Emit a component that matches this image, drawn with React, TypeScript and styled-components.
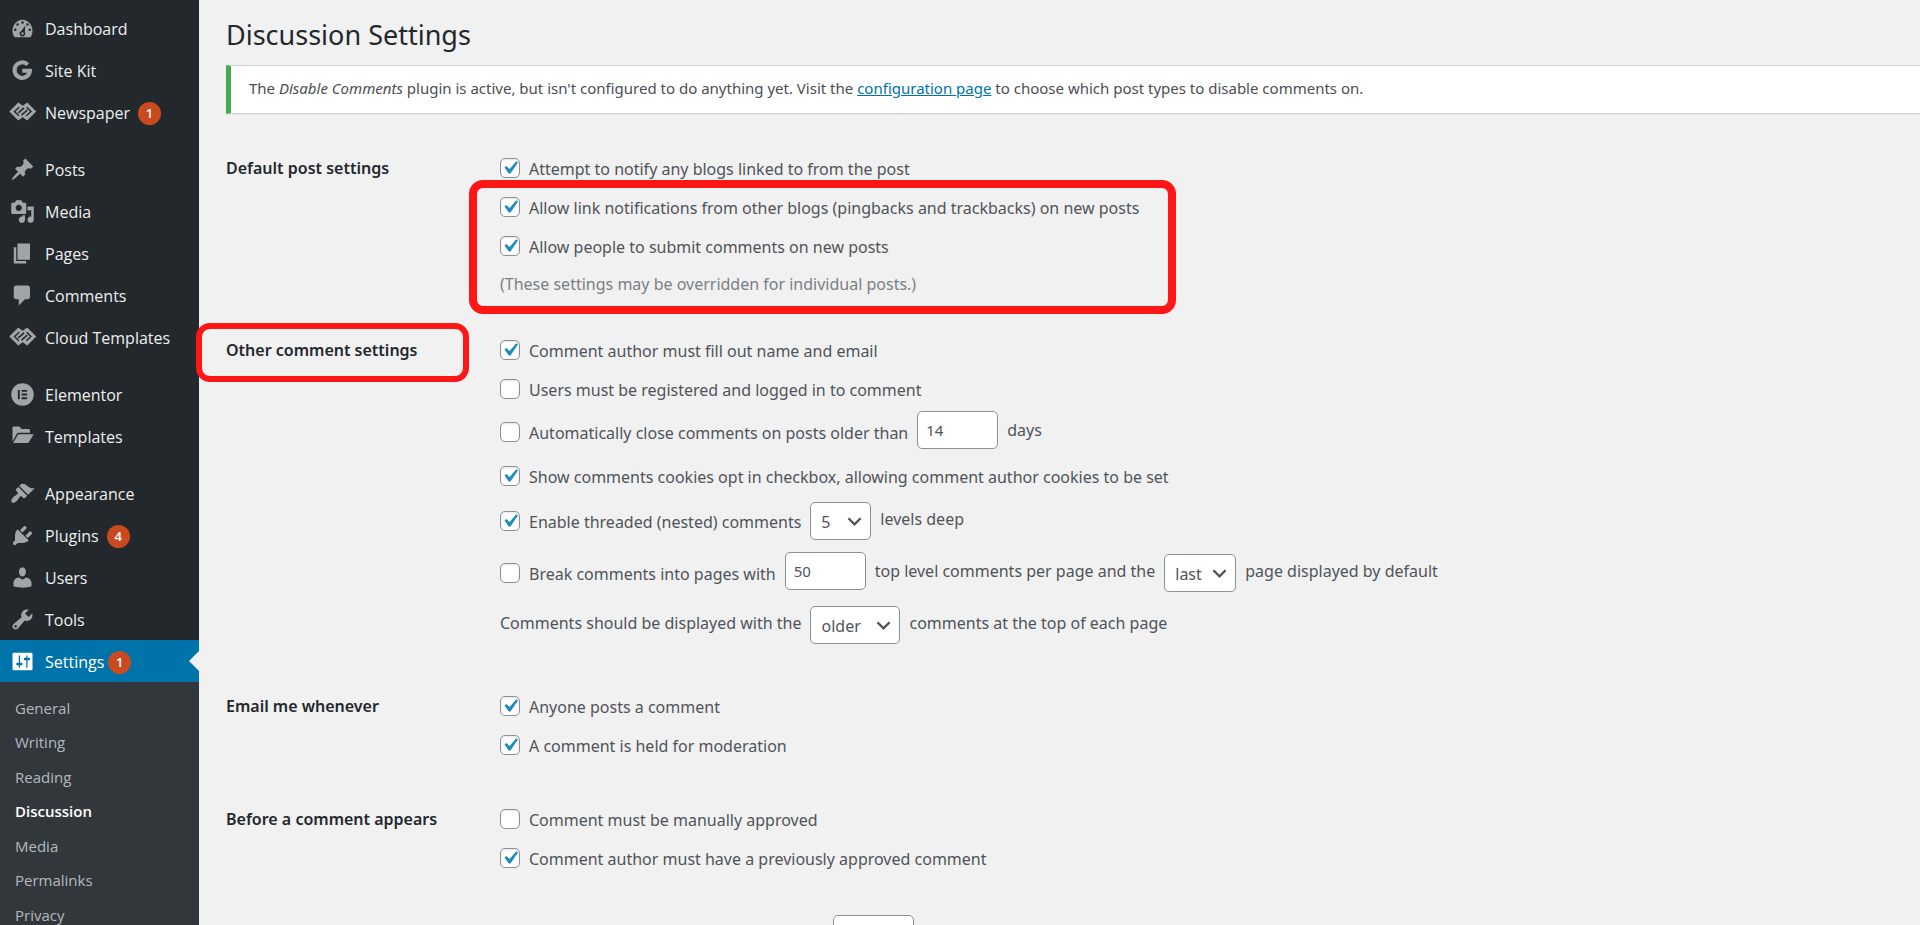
import React, { useId, useState } from "react";
import styled, { createGlobalStyle, css } from "styled-components";

const GlobalStyle = createGlobalStyle`
  *, *::before, *::after { box-sizing: border-box; }
  body {
    margin: 0;
    background: #f1f1f1;
    color: #50545a;
    font-family: "Open Sans", "Noto Sans", sans-serif;
    font-size: 16px;
    line-height: 24px;
  }
`;

/* ---------- shell ---------- */

const Shell = styled.div`
  display: flex;
  height: 100vh;
  overflow: hidden;
`;

const Sidebar = styled.nav`
  flex: 0 0 199px;
  padding-top: 7px;
  background: #23282d;
`;

const Main = styled.main`
  flex: 1;
  min-width: 0;
  padding: 15px 0 0 27px;
  font-family: "Noto Sans", "Open Sans", sans-serif;
`;

/* ---------- sidebar ---------- */

const MenuList = styled.ul`
  list-style: none;
  margin: 0;
  padding: 0;
`;

const MenuItem = styled.li<{ $startsGroup?: boolean }>`
  margin-top: ${(p) => (p.$startsGroup ? "15px" : "0")};
`;

const MenuLink = styled.a<{ $current?: boolean }>`
  position: relative;
  display: flex;
  align-items: center;
  height: 42px;
  padding-left: 10px;
  color: #eee;
  text-decoration: none;
  ${(p) =>
    p.$current &&
    css`
      background: #0073aa;
      color: #fff;
      &::after {
        content: "";
        position: absolute;
        top: 11px;
        right: 0;
        border: 10px solid transparent;
        border-left: 0;
        border-right-color: #f1f1f1;
      }
    `}
`;

const MenuIcon = styled.svg<{ $current?: boolean }>`
  flex: none;
  overflow: visible;
  width: 25px;
  height: 25px;
  margin-right: 10px;
  fill: ${(p) => (p.$current ? "#fff" : "#a0a5aa")};
`;

const MenuText = styled.span`
  padding-top: 2px;
`;

const Badge = styled.span<{ $tight?: boolean }>`
  width: 23px;
  height: 23px;
  margin-top: 3px;
  margin-left: ${(p) => (p.$tight ? "4px" : "8px")};
  border-radius: 50%;
  background: #ca4a1f;
  color: #fff;
  font-size: 13px;
  font-weight: 600;
  line-height: 22px;
  text-align: center;
`;

const SubMenu = styled.ul`
  display: grid;
  grid-auto-rows: 1fr;
  min-height: 261px;
  margin: 0;
  padding: 10px 0;
  list-style: none;
  background: #32373c;
`;

const SubLink = styled.a<{ $current?: boolean }>`
  display: block;
  padding: 4px 15px;
  color: ${(p) => (p.$current ? "#fff" : "#b4b9be")};
  font-size: 15px;
  font-weight: ${(p) => (p.$current ? 600 : 400)};
  text-decoration: none;
`;

const BUILDER_LOGO = (
  <g transform="translate(-.6 2)">
    <path d="M0 7.200L7.200 0l3.600 2.600L14.400 0l7.200 7.200-7.200 7.200-3.600-2.600-3.600 2.600z" />
    <path
      d="M7.600 10.600L4.200 7.200 8 3.800M14 3.800L17.400 7.200 13.600 10.600M7.200 8.300l4.600-4M14.400 6.100l-4.600 4"
      fill="none"
      stroke="#23282d"
      strokeWidth="1.100"
    />
  </g>
);

const ICONS: Record<string, React.ReactNode> = {
  dashboard: (
    <path
      fillRule="evenodd"
      d="M3.76 17h12.48c1.1-1.37 1.76-3.11 1.76-5 0-4.97-3.58-9-8-9s-8 4.03-8 9c0 1.89.66 3.63 1.76 5zM10 4.2a1 1 0 1 1 0 2 1 1 0 0 1 0-2zM6 5.8a1 1 0 1 1 0 2 1 1 0 0 1 0-2zm8 0a1 1 0 1 1 0 2 1 1 0 0 1 0-2zM4.2 10a1 1 0 1 1 0 2 1 1 0 0 1 0-2zm11.6 0a1 1 0 1 1 0 2 1 1 0 0 1 0-2zM12.3 7.6l-.5 5.3a2.2 2.2 0 1 1-2.9-.8zM10 13a1 1 0 1 0 0 2 1 1 0 0 0 0-2z"
    />
  ),
  sitekit: (
    <path
      d="M14.200 5.300A6.200 6.200 0 1 0 16 10.100H9.800"
      fill="none"
      stroke="#a0a5aa"
      strokeWidth="3.200"
    />
  ),
  builder: BUILDER_LOGO,
  post: (
    <path d="M10.44 3.02l1.82-1.82 6.36 6.35-1.83 1.82c-1.05-.68-2.48-.57-3.41.36l-.75.75c-.92.93-1.04 2.35-.35 3.41l-1.83 1.82-2.41-2.41-2.8 2.79c-.42.42-3.38 2.71-3.8 2.29s1.86-3.39 2.28-3.81l2.79-2.79L4.1 9.36l1.83-1.82c1.05.69 2.48.57 3.4-.36l.75-.75c.93-.92 1.05-2.35.36-3.41z" />
  ),
  media: (
    <path d="M13 11V4c0-.55-.45-1-1-1h-1.67L9 1H5L3.67 3H2c-.55 0-1 .45-1 1v7c0 .55.45 1 1 1h10c.55 0 1-.45 1-1zM7 4.5c1.38 0 2.5 1.12 2.5 2.5S8.38 9.5 7 9.5 4.5 8.38 4.5 7 5.62 4.5 7 4.5zM14 6h5v10.5c0 1.38-1.12 2.5-2.5 2.5S14 17.88 14 16.5s1.12-2.5 2.5-2.5c.17 0 .34.02.5.05V9h-3V6zm-4 8.05V13h2v3.5c0 1.38-1.12 2.5-2.5 2.5S7 17.88 7 16.5 8.12 14 9.5 14c.17 0 .34.02.5.05z" />
  ),
  page: <path d="M6 15V2h10v13H6zm-1 1h8v2H3V5h2v11z" />,
  comments: (
    <path d="M5 2h9c1.1 0 2 .9 2 2v7c0 1.1-.9 2-2 2h-2l-5 5v-5H5c-1.1 0-2-.9-2-2V4c0-1.1.9-2 2-2z" />
  ),
  elementor: (
    <path
      fillRule="evenodd"
      d="M10 1a9 9 0 1 1 0 18 9 9 0 0 1 0-18zM6.3 6.3v7.4h1.5V6.3zm3 0v1.5h4.4V6.3zm0 2.95v1.5h4.4v-1.5zm0 2.95v1.5h4.4v-1.5z"
    />
  ),
  folder: (
    <path d="M2 3.2C2 2.5 2.5 2 3.200 2h4.300l1.700 2h5.600c.7 0 1.200.5 1.200 1.200V7H7.200c-.8 0-1.400.4-1.800 1L2 14zM7.400 8.200H19l-3.800 6.200c-.3.500-.7.800-1.300.8H2.500l3.700-6.400c.3-.4.700-.6 1.200-.6z" />
  ),
  appearance: (
    <path d="M14.48 11.06L7.41 3.99l1.5-1.5c.5-.56 2.3-.47 3.51.32 1.21.8 1.43 1.28 2.91 2.1 1.18.64 2.45 1.26 4.45.85zm-.71.71L6.7 4.7 4.93 6.47c-.39.39-.39 1.02 0 1.41l1.06 1.06c.39.39.39 1.03 0 1.42-.6.6-1.43 1.11-2.21 1.69-.35.26-.7.53-1.01.84C1.43 14.23.4 16.08 1.4 17.07c.99 1 2.84-.03 4.18-1.36.31-.31.58-.66.85-1.02.57-.78 1.08-1.61 1.69-2.21.39-.39 1.02-.39 1.41 0l1.06 1.06c.39.39 1.02.39 1.41 0z" />
  ),
  plugins: (
    <path d="M13.11 4.36L9.87 7.6 8 5.73l3.24-3.24c.35-.34 1.05-.2 1.56.32.52.51.66 1.21.31 1.55zm-8 1.77l.91-1.12 9.01 9.01-1.19.84c-.71.71-2.63 1.16-3.82 1.16H6.14L4.9 17.26c-.59.59-1.54.59-2.12 0-.59-.58-.59-1.53 0-2.12l1.24-1.24v-3.88c0-1.13.4-3.19 1.09-3.89zm7.26 3.97l3.24-3.24c.34-.35 1.04-.21 1.55.31.52.51.66 1.21.31 1.55l-3.24 3.25z" />
  ),
  users: (
    <path d="M10 9.25c-2.27 0-2.73-3.44-2.73-3.44C7 4.02 7.82 2 9.97 2c2.16 0 2.98 2.02 2.71 3.81 0 0-.41 3.44-2.68 3.44zm0 2.57L12.72 10c2.39 0 4.52 2.33 4.52 4.53v2.49s-3.65 1.13-7.24 1.13c-3.65 0-7.24-1.13-7.24-1.13v-2.49c0-2.25 1.94-4.48 4.47-4.48z" />
  ),
  tools: (
    <path d="M16.68 9.77c-1.34 1.34-3.3 1.67-4.95.99l-5.41 6.52c-.99.99-2.59.99-3.58 0s-.99-2.59 0-3.57l6.52-5.42c-.68-1.65-.35-3.61.99-4.95 1.28-1.28 3.12-1.62 4.72-1.06l-2.89 2.89 2.82 2.82 2.86-2.87c.53 1.58.18 3.39-1.08 4.65zM3.81 16.21c.4.39 1.04.39 1.43 0 .4-.4.4-1.04 0-1.43-.39-.4-1.03-.4-1.43 0-.39.39-.39 1.03 0 1.43z" />
  ),
  settings: (
    <path d="M18 16V4c0-.55-.45-1-1-1H3c-.55 0-1 .45-1 1v12c0 .55.45 1 1 1h14c.55 0 1-.45 1-1zM8 11h1c.55 0 1 .45 1 1s-.45 1-1 1H8v1.500c0 .28-.22.5-.5.5s-.5-.22-.5-.5V13H6c-.55 0-1-.45-1-1s.45-1 1-1h1V5.500c0-.28.22-.5.5-.5s.5.22.5.5V11zm5-2h-1c-.55 0-1-.45-1-1s.45-1 1-1h1V5.500c0-.28.22-.5.5-.5s.5.22.5.5V7h1c.55 0 1 .45 1 1s-.45 1-1 1h-1v5.500c0 .28-.22.5-.5.5s-.5-.22-.5-.5V9z" />
  ),
};

type Entry = {
  label: string;
  icon: string;
  badge?: number;
  tightBadge?: boolean;
  startsGroup?: boolean;
  current?: boolean;
};

const MENU: Entry[] = [
  { label: "Dashboard", icon: "dashboard" },
  { label: "Site Kit", icon: "sitekit" },
  { label: "Newspaper", icon: "builder", badge: 1 },
  { label: "Posts", icon: "post", startsGroup: true },
  { label: "Media", icon: "media" },
  { label: "Pages", icon: "page" },
  { label: "Comments", icon: "comments" },
  { label: "Cloud Templates", icon: "builder" },
  { label: "Elementor", icon: "elementor", startsGroup: true },
  { label: "Templates", icon: "folder" },
  { label: "Appearance", icon: "appearance", startsGroup: true },
  { label: "Plugins", icon: "plugins", badge: 4 },
  { label: "Users", icon: "users" },
  { label: "Tools", icon: "tools" },
  { label: "Settings", icon: "settings", badge: 1, tightBadge: true, current: true },
];

const SUBMENU = ["General", "Writing", "Reading", "Discussion", "Media", "Permalinks", "Privacy"];

/* ---------- content ---------- */

const Title = styled.h1`
  margin: 0 0 10px;
  color: #23282d;
  font-size: 27px;
  font-weight: 400;
  line-height: 40px;
`;

const Notice = styled.div`
  margin-bottom: 34px;
  padding: 10px 18px 13px;
  border: 1px solid #ccd0d4;
  border-left: 5px solid #46ab50;
  border-right: 0;
  background: #fff;
  box-shadow: 0 1px 1px rgba(0, 0, 0, 0.04);
  color: #4a4e53;
  font-size: 15px;
`;

const NoticeLink = styled.a`
  color: #0073aa;
`;

const Form = styled.form`
  display: flex;
  flex-direction: column;
  gap: 35px;
`;

const SectionGrid = styled.section`
  display: grid;
  grid-template-columns: 274px 1fr;
  align-items: start;
`;

const SectionTitle = styled.h2`
  position: relative;
  margin: 0;
  color: #23282d;
  font-size: 16px;
  font-weight: 600;
  line-height: 40px;
`;

const Marked = styled.div`
  position: relative;
  width: fit-content;
`;

const MarkerBox = styled.span<{ $inset: string; $width: number }>`
  position: absolute;
  inset: ${(p) => p.$inset};
  border: ${(p) => p.$width}px solid #ff1616;
  border-radius: 14px;
  pointer-events: none;
`;

const Row = styled.div<{ $size?: "input" | "select" }>`
  display: flex;
  align-items: center;
  height: ${(p) => (p.$size === "select" ? 52 : p.$size === "input" ? 48 : 39)}px;
  white-space: nowrap;
`;

const LimitRow = styled(Row)`
  padding-left: 598px;
`;

const Hint = styled.p`
  margin: 0;
  padding-top: 8px;
  color: #7b7f84;
  line-height: 22px;
`;

const CheckWrap = styled.span`
  position: relative;
  display: flex;
  flex: none;
  margin-right: 9px;
`;

const CheckInput = styled.input`
  appearance: none;
  width: 20px;
  height: 20px;
  margin: 0;
  border: 1px solid #8c9096;
  border-radius: 5px;
  background: #fff;
  box-shadow: inset 0 1px 2px rgba(0, 0, 0, 0.1);
  &:checked + svg {
    display: block;
  }
`;

const CheckMark = styled.svg`
  display: none;
  position: absolute;
  inset: -3px;
  width: 26px;
  height: 26px;
  fill: #1e8cbe;
  pointer-events: none;
`;

const CheckLabel = styled.label`
  padding-top: 2px;
`;

const Plain = styled.span`
  padding-bottom: 4px;
`;

const controlBox = css`
  height: 38px;
  border: 1px solid #8c9096;
  border-radius: 5px;
  background: #fff;
  color: #50545a;
  font-family: inherit;
`;

const NumberInput = styled.input`
  ${controlBox}
  width: 81px;
  margin: 0 9px 4px;
  padding: 0 8px;
  font-size: 15px;
`;

const SelectWrap = styled.span<{ $w: number }>`
  position: relative;
  display: flex;
  width: ${(p) => p.$w}px;
  margin: 0 9px;
`;

const SelectBox = styled.select`
  ${controlBox}
  appearance: none;
  width: 100%;
  padding: 2px 26px 0 10px;
  font-size: 16px;
`;

const Chevron = styled.svg`
  position: absolute;
  top: 12px;
  right: 9px;
  width: 15px;
  height: 15px;
  fill: none;
  stroke: #50545a;
  stroke-width: 2.5;
  pointer-events: none;
`;

function Section({ title, mark, children }: { title: string; mark?: boolean; children: React.ReactNode }) {
  const id = useId();
  return (
    <SectionGrid role="group" aria-labelledby={id}>
      <SectionTitle id={id}>
        {title}
        {mark && <MarkerBox $inset="-7px 31px -12px -30px" $width={6} />}
      </SectionTitle>
      <div>{children}</div>
    </SectionGrid>
  );
}

function Check({ label, on }: { label: string; on?: boolean }) {
  const id = useId();
  return (
    <>
      <CheckWrap>
        <CheckInput type="checkbox" id={id} defaultChecked={on} />
        <CheckMark viewBox="0 0 20 20" aria-hidden="true">
          <path d="M14.83 4.89l1.34.94-5.81 8.38H9.02L5.78 9.67l1.34-1.25 2.57 2.4z" />
        </CheckMark>
      </CheckWrap>
      <CheckLabel htmlFor={id}>{label}</CheckLabel>
    </>
  );
}

function Dropdown({ label, width, options, initial }: { label: string; width: number; options: string[]; initial: string }) {
  const [value, setValue] = useState(initial);
  return (
    <SelectWrap $w={width}>
      <SelectBox aria-label={label} value={value} onChange={(e) => setValue(e.target.value)}>
        {options.map((o) => (
          <option key={o}>{o}</option>
        ))}
      </SelectBox>
      <Chevron viewBox="0 0 16 16" aria-hidden="true">
        <path d="M1.500 4.500L8 11l6.500-6.500" />
      </Chevron>
    </SelectWrap>
  );
}

export default function App() {
  return (
    <>
      <GlobalStyle />
      <Shell>
        <Sidebar aria-label="Main menu">
          <MenuList>
            {MENU.map((m) => (
              <MenuItem key={m.label} $startsGroup={m.startsGroup}>
                <MenuLink href="#" $current={m.current}>
                  <MenuIcon viewBox="0 0 20 20" $current={m.current} aria-hidden="true">
                    {ICONS[m.icon]}
                  </MenuIcon>
                  <MenuText>{m.label}</MenuText>
                  {m.badge && <Badge $tight={m.tightBadge}>{m.badge}</Badge>}
                </MenuLink>
                {m.current && (
                  <SubMenu>
                    {SUBMENU.map((s) => (
                      <li key={s}>
                        <SubLink href="#" $current={s === "Discussion"}>
                          {s}
                        </SubLink>
                      </li>
                    ))}
                  </SubMenu>
                )}
              </MenuItem>
            ))}
          </MenuList>
        </Sidebar>

        <Main>
          <Title>Discussion Settings</Title>
          <Notice>
            The <em>Disable Comments</em> plugin is active, but isn't configured to do anything yet. Visit the{" "}
            <NoticeLink href="#">configuration page</NoticeLink> to choose which post types to disable comments on.
          </Notice>

          <Form>
            <Section title="Default post settings">
              <Row>
                <Check on label="Attempt to notify any blogs linked to from the post" />
              </Row>
              <Marked>
                <Row>
                  <Check on label="Allow link notifications from other blogs (pingbacks and trackbacks) on new posts" />
                </Row>
                <Row>
                  <Check on label="Allow people to submit comments on new posts" />
                </Row>
                <Hint>(These settings may be overridden for individual posts.)</Hint>
                <MarkerBox $inset="-7px -37px -19px -31px" $width={8} />
              </Marked>
            </Section>

            <Section title="Other comment settings" mark>
              <Row>
                <Check on label="Comment author must fill out name and email" />
              </Row>
              <Row>
                <Check label="Users must be registered and logged in to comment" />
              </Row>
              <Row $size="input">
                <Check label="Automatically close comments on posts older than" />
                <NumberInput aria-label="Days before comments close" defaultValue="14" />
                <Plain>days</Plain>
              </Row>
              <Row>
                <Check on label="Show comments cookies opt in checkbox, allowing comment author cookies to be set" />
              </Row>
              <Row $size="select">
                <Check on label="Enable threaded (nested) comments" />
                <Dropdown label="Thread depth" width={61} options={["2", "3", "4", "5", "6", "7", "8", "9", "10"]} initial="5" />
                <Plain>levels deep</Plain>
              </Row>
              <Row $size="select">
                <Check label="Break comments into pages with" />
                <NumberInput aria-label="Comments per page" defaultValue="50" />
                <Plain>top level comments per page and the</Plain>
                <Dropdown label="Default page" width={72} options={["last", "first"]} initial="last" />
                <Plain>page displayed by default</Plain>
              </Row>
              <Row $size="select">
                <Plain>Comments should be displayed with the</Plain>
                <Dropdown label="Comment order" width={90} options={["older", "newer"]} initial="older" />
                <Plain>comments at the top of each page</Plain>
              </Row>
            </Section>

            <Section title="Email me whenever">
              <Row>
                <Check on label="Anyone posts a comment" />
              </Row>
              <Row>
                <Check on label="A comment is held for moderation" />
              </Row>
            </Section>

            <Section title="Before a comment appears">
              <Row>
                <Check label="Comment must be manually approved" />
              </Row>
              <Row>
                <Check on label="Comment author must have a previously approved comment" />
              </Row>
            </Section>

            <LimitRow $size="input">
              <NumberInput aria-label="Number of links that holds a comment for moderation" />
            </LimitRow>
          </Form>
        </Main>
      </Shell>
    </>
  );
}
